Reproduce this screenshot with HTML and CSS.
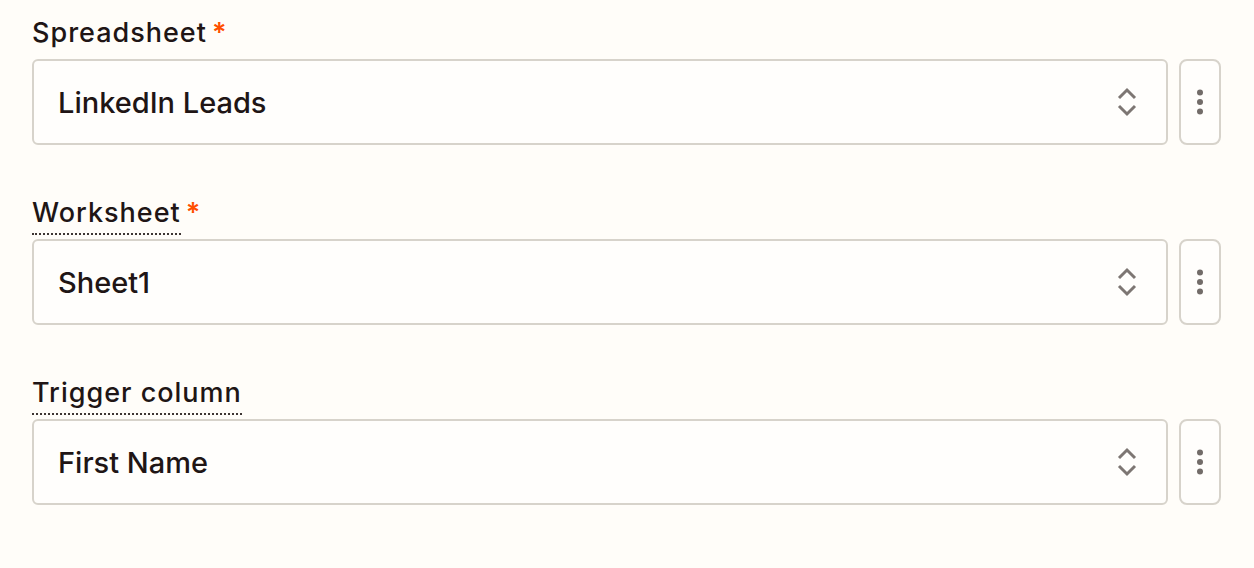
FILE: index.html
```html
<!DOCTYPE html>
<html lang="en">
<head>
  <meta charset="UTF-8">
  <title>Trigger setup</title>
  <link rel="stylesheet" href="styles.css">
</head>
<body>

  <div class="field">
    <label class="field-label">Spreadsheet</label><span class="required">*</span>
    <div class="control">
      <div class="select">
        <span class="select-value">LinkedIn Leads</span>
        <svg class="chevrons" width="24" height="36" viewBox="0 0 24 36"><path d="M4 14 L12 6 L20 14 M4 22 L12 30 L20 22"/></svg>
      </div>
      <button class="more"><svg width="10" height="30" viewBox="0 0 10 30"><circle cx="5" cy="5.5" r="3"/><circle cx="5" cy="15" r="3"/><circle cx="5" cy="24.5" r="3"/></svg></button>
    </div>
  </div>

  <div class="field">
    <label class="field-label has-help">Worksheet</label><span class="required">*</span>
    <div class="control">
      <div class="select">
        <span class="select-value">Sheet1</span>
        <svg class="chevrons" width="24" height="36" viewBox="0 0 24 36"><path d="M4 14 L12 6 L20 14 M4 22 L12 30 L20 22"/></svg>
      </div>
      <button class="more"><svg width="10" height="30" viewBox="0 0 10 30"><circle cx="5" cy="5.5" r="3"/><circle cx="5" cy="15" r="3"/><circle cx="5" cy="24.5" r="3"/></svg></button>
    </div>
  </div>

  <div class="field">
    <label class="field-label has-help">Trigger column</label>
    <div class="control">
      <div class="select">
        <span class="select-value">First Name</span>
        <svg class="chevrons" width="24" height="36" viewBox="0 0 24 36"><path d="M4 14 L12 6 L20 14 M4 22 L12 30 L20 22"/></svg>
      </div>
      <button class="more"><svg width="10" height="30" viewBox="0 0 10 30"><circle cx="5" cy="5.5" r="3"/><circle cx="5" cy="15" r="3"/><circle cx="5" cy="24.5" r="3"/></svg></button>
    </div>
  </div>

</body>
</html>
```

FILE: styles.css
```css
body {
  margin: 0;
  padding: 17px 33px 0 32px;
  background: #fffdf9;
  font-family: Inter, "Noto Sans", sans-serif;
  color: #201515;
}

.field {
  margin-bottom: 52px;
}

.field-label {
  display: inline-block;
  font-size: 27px;
  font-weight: 500;
  letter-spacing: 1px;
  line-height: 32px;
  padding-bottom: 4px;
  border-bottom: 2px dotted transparent;
  margin-bottom: 4px;
}

.field-label.has-help {
  border-bottom-color: #3d3533;
}

.required {
  color: #ff4f00;
  font-size: 27px;
  font-weight: 600;
  margin-left: 5px;
  vertical-align: top;
  line-height: 32px;
}

.control {
  display: flex;
  gap: 11px;
}

.select {
  flex: 1;
  height: 86px;
  box-sizing: border-box;
  border: 2px solid #d7d3cb;
  border-radius: 6px;
  background: #fffefc;
  display: flex;
  align-items: center;
  justify-content: space-between;
  padding: 0 27px 0 24px;
}

.select-value {
  font-size: 29px;
  font-weight: 500;
}

.chevrons path {
  fill: none;
  stroke: #7d7673;
  stroke-width: 3;
}

.more {
  width: 42px;
  height: 86px;
  box-sizing: border-box;
  border: 2px solid #d7d3cb;
  border-radius: 8px;
  background: #fffefc;
  padding: 0;
  display: flex;
  align-items: center;
  justify-content: center;
  cursor: pointer;
}

.more circle {
  fill: #726c69;
}
```
